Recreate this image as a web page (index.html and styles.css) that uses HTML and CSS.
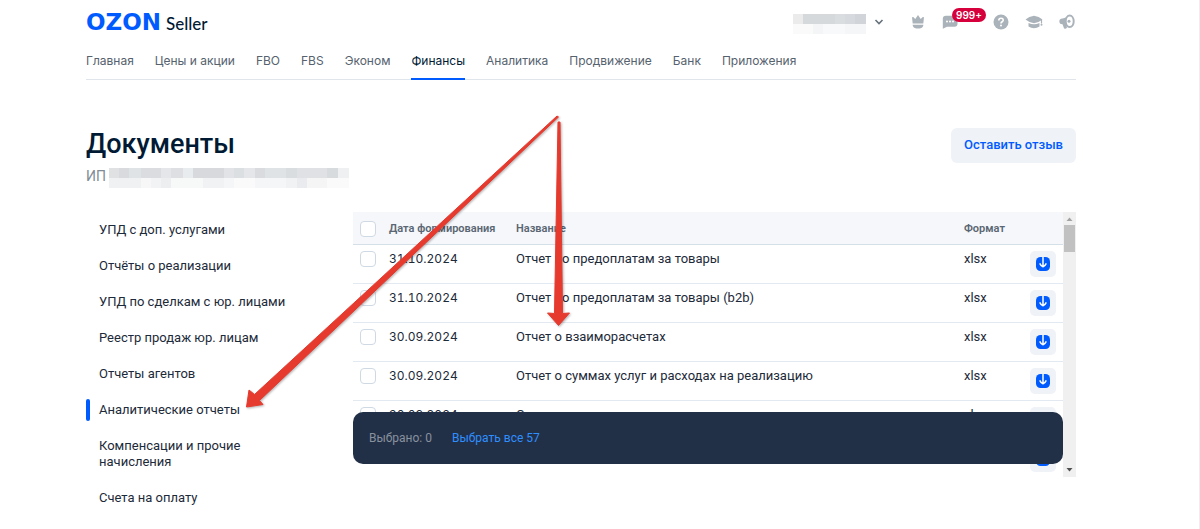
FILE: index.html
```html
<!DOCTYPE html>
<html lang="ru">
<head>
<meta charset="utf-8">
<title>Документы — Ozon Seller</title>
<link rel="stylesheet" href="styles.css">
</head>
<body>
<div class="page">
  <header class="topbar">
    <a class="logo" href="#"><span class="logo-brand">OZON</span><span class="logo-product">Seller</span></a>
    <div class="tools">
      <button class="account" type="button" aria-label="Аккаунт">
        <span class="mask mask-account"></span>
        <svg width="10" height="8" viewBox="0 0 10 8"><path d="M1.500 2 5 5.500 8.500 2" fill="none" stroke="#66727d" stroke-width="1.600"/></svg>
      </button>
      <button class="tool tool-first" type="button" aria-label="Премиум"><svg width="16" height="16" viewBox="0 0 16 16"><path d="M2 3.200 3.200 3 5.300 5 8 1l2.700 4 2.100-2 1.200.2-.7 6.300H2.700z"/><path d="M2.600 10.800h10.800c-.3 2.300-1.400 3.700-5.400 3.700s-5.100-1.400-5.400-3.700z"/></svg></button>
      <button class="tool" type="button" aria-label="Сообщения"><svg width="16" height="16" viewBox="0 0 16 16"><path d="M4 1.800h8.500q3 0 3 3v5q0 3-3 3H5L.8 14.800V4.800q0-3 3.200-3z"/><g fill="#fff"><circle cx="5" cy="7.500" r="1"/><circle cx="8" cy="7.500" r="1"/><circle cx="11" cy="7.500" r="1"/></g></svg><span class="badge">999+</span></button>
      <button class="tool tool-wide" type="button" aria-label="Помощь"><svg width="16" height="16" viewBox="0 0 16 16"><circle cx="8" cy="8" r="7.500"/><path d="M5.800 6.400C5.800 3.500 10.300 3.600 10.200 6.200 10.200 7.700 8 7.800 8 9.400" fill="none" stroke="#fff" stroke-width="1.600"/><circle cx="8" cy="11.600" r="1" fill="#fff"/></svg></button>
      <button class="tool" type="button" aria-label="Обучение"><svg width="18" height="16" viewBox="0 0 18 16"><path d="M.5 5.500Q4 2.500 9 1.700q5 .8 8.500 3.800Q14 8.500 9 9.200 4 8.500.5 5.500z"/><path d="M3.500 9Q9 11.500 14.500 9v3.500Q12 14.300 9 14.300T3.500 12.500z"/><path d="M16.500 6v3.500" stroke="#abb3ba" stroke-width="1.200"/><circle cx="16.500" cy="10.700" r="1"/></svg></button>
      <button class="tool" type="button" aria-label="Новости"><svg width="16" height="16" viewBox="0 0 16 16"><path d="M10 1.500C7 4 3.500 4.500 2 4.800-.2 5.500-.2 9.500 2 10l1.500.3L5 14.300q1.500 1.300 3-.5L7.500 11.500 10 13.500z"/><ellipse cx="10.700" cy="7.300" rx="4" ry="5.700" fill="#fff" stroke="#abb3ba" stroke-width="2"/><circle cx="10" cy="7.300" r="1.500"/></svg></button>
    </div>
  </header>

  <nav class="nav">
    <a href="#">Главная</a><a href="#">Цены и акции</a><a href="#">FBO</a><a href="#">FBS</a><a href="#">Эконом</a><a class="current" href="#">Финансы</a><a href="#">Аналитика</a><a href="#">Продвижение</a><a href="#">Банк</a><a href="#">Приложения</a>
  </nav>

  <section class="heading">
    <div>
      <h1>Документы</h1>
      <p class="owner">ИП <span class="mask mask-owner"></span></p>
    </div>
    <button class="feedback" type="button">Оставить отзыв</button>
  </section>

  <main class="content">
    <aside class="side">
      <a href="#">УПД с доп. услугами</a>
      <a href="#">Отчёты о реализации</a>
      <a href="#">УПД по сделкам с юр. лицами</a>
      <a href="#">Реестр продаж юр. лицам</a>
      <a href="#">Отчеты агентов</a>
      <a class="current" href="#">Аналитические отчеты</a>
      <a href="#">Компенсации и прочие начисления</a>
      <a href="#">Счета на оплату</a>
      <a href="#">Акты сверки</a>
    </aside>
    <div class="panel">
      <div class="viewport">
        <table class="docs">
          <thead>
            <tr><th class="col-check"><input type="checkbox" aria-label="Выбрать все"></th><th class="col-date">Дата формирования</th><th>Название</th><th class="col-format">Формат</th><th class="col-action"></th></tr>
          </thead>
          <tbody>
            <tr><td><input type="checkbox" aria-label="Выбрать документ"></td><td class="date">31.10.2024</td><td>Отчет по предоплатам за товары</td><td>xlsx</td><td><button class="download" type="button" aria-label="Скачать"><svg width="14" height="14" viewBox="0 0 14 14"><rect width="14" height="14" rx="4.500" fill="#005bff"/><path d="M7 0v9.500M3.700 6.300Q5 9 7 9.700 9 9 10.300 6.300" fill="none" stroke="#fff" stroke-width="1.500"/></svg></button></td></tr>
            <tr><td><input type="checkbox" aria-label="Выбрать документ"></td><td class="date">31.10.2024</td><td>Отчет по предоплатам за товары (b2b)</td><td>xlsx</td><td><button class="download" type="button" aria-label="Скачать"><svg width="14" height="14" viewBox="0 0 14 14"><rect width="14" height="14" rx="4.500" fill="#005bff"/><path d="M7 0v9.500M3.700 6.300Q5 9 7 9.700 9 9 10.300 6.300" fill="none" stroke="#fff" stroke-width="1.500"/></svg></button></td></tr>
            <tr><td><input type="checkbox" aria-label="Выбрать документ"></td><td class="date">30.09.2024</td><td>Отчет о взаиморасчетах</td><td>xlsx</td><td><button class="download" type="button" aria-label="Скачать"><svg width="14" height="14" viewBox="0 0 14 14"><rect width="14" height="14" rx="4.500" fill="#005bff"/><path d="M7 0v9.500M3.700 6.300Q5 9 7 9.700 9 9 10.300 6.300" fill="none" stroke="#fff" stroke-width="1.500"/></svg></button></td></tr>
            <tr><td><input type="checkbox" aria-label="Выбрать документ"></td><td class="date">30.09.2024</td><td>Отчет о суммах услуг и расходах на реализацию</td><td>xlsx</td><td><button class="download" type="button" aria-label="Скачать"><svg width="14" height="14" viewBox="0 0 14 14"><rect width="14" height="14" rx="4.500" fill="#005bff"/><path d="M7 0v9.500M3.700 6.300Q5 9 7 9.700 9 9 10.300 6.300" fill="none" stroke="#fff" stroke-width="1.500"/></svg></button></td></tr>
            <tr><td><input type="checkbox" aria-label="Выбрать документ"></td><td class="date">30.09.2024</td><td>Отчет</td><td>xlsx</td><td><button class="download" type="button" aria-label="Скачать"><svg width="14" height="14" viewBox="0 0 14 14"><rect width="14" height="14" rx="4.500" fill="#005bff"/><path d="M7 0v9.500M3.700 6.300Q5 9 7 9.700 9 9 10.300 6.300" fill="none" stroke="#fff" stroke-width="1.500"/></svg></button></td></tr>
            <tr><td><input type="checkbox" aria-label="Выбрать документ"></td><td class="date">30.09.2024</td><td>Отчет</td><td>xlsx</td><td><button class="download" type="button" aria-label="Скачать"><svg width="14" height="14" viewBox="0 0 14 14"><rect width="14" height="14" rx="4.500" fill="#005bff"/><path d="M7 0v9.500M3.700 6.300Q5 9 7 9.700 9 9 10.300 6.300" fill="none" stroke="#fff" stroke-width="1.500"/></svg></button></td></tr>
          </tbody>
        </table>
        <div class="selection"><span>Выбрано: 0</span><button type="button">Выбрать все 57</button></div>
      </div>
      <div class="scrollbar">
        <svg width="13" height="13" viewBox="0 0 13 13"><path d="M3.500 9h6l-3-3.500z" fill="#a3a3a3"/></svg>
        <span class="thumb"></span>
        <svg class="scroll-down" width="13" height="13" viewBox="0 0 13 13"><path d="M3.500 4h6l-3 3.500z" fill="#505050"/></svg>
      </div>
    </div>
  </main>
</div>
<svg class="arrows" width="600" height="440" viewBox="0 0 600 440" aria-hidden="true">
  <g fill="#e63a2e" stroke="#e63a2e" stroke-linejoin="round">
    <path d="M557 116 254.500 394.500 249 390 246.500 407 263 404.500 259.500 400.500 558.500 117z"/>
    <path d="M558 122 554.500 313.500 547.500 313 558.500 325.500 569.500 313 562.500 313.500 560 122z"/>
  </g>
</svg>
</body>
</html>
```
FILE: styles.css
```css
* {
  box-sizing: border-box;
}

body {
  margin: 0;
  height: 100vh;
  overflow: hidden;
  position: relative;
  background: #fff;
  border-right: 1px solid #eceef0;
  color: #1d2a39;
  font: 13px/16px Roboto, Inter, sans-serif;
}

a {
  color: inherit;
  text-decoration: none;
}

button {
  padding: 0;
  border: 0;
  background: none;
  font: inherit;
  cursor: pointer;
}

svg {
  display: block;
}

.page {
  padding: 0 123px 0 86px;
}

.topbar {
  display: flex;
  justify-content: space-between;
  align-items: center;
  height: 44px;
}

.logo {
  display: flex;
  align-items: baseline;
  gap: 5px;
  padding-top: 2px;
}

.logo-brand {
  color: #005bff;
  font: bold 23px/24px "DejaVu Sans", sans-serif;
}

.logo-product {
  color: #001a34;
  font: 500 17px/24px Lato, sans-serif;
}

.tools {
  display: flex;
  align-items: center;
  padding-right: 1px;
}

.account {
  display: flex;
  align-items: center;
  gap: 8px;
}

.mask {
  display: inline-block;
  height: 20px;
}

.mask-account {
  width: 73px;
  margin-top: 4px;
  background:
    linear-gradient(90deg, #ebebec 0 10px, #d6d9dc 10px 42px, #dadde0 42px 52px, #d6dade 52px 62px, #d1d5da 62px) 0 0 / 100% 10px no-repeat,
    linear-gradient(90deg, #fafafa 0 20px, #f4f5f6 20px 30px, #f8f9fa 30px 52px, #f4f6f7 52px) 0 10px / 100% 10px no-repeat;
}

.tool {
  position: relative;
  margin-left: 16px;
  fill: #abb3ba;
}

.tool-first {
  margin-left: 26px;
}

.tool-wide {
  margin-left: 35px;
}

.badge {
  position: absolute;
  left: 10px;
  top: -6px;
  padding: 0 4px;
  border-radius: 7px;
  background: #d6003c;
  color: #fff;
  font: 600 10px/14px Inter, sans-serif;
}

.nav {
  display: flex;
  gap: 21px;
  border-bottom: 1px solid #dfe5eb;
  color: #56626e;
  font-family: Inter, sans-serif;
  font-size: 12px;
}

.nav a {
  padding: 9px 0;
  margin-bottom: -1px;
  border-bottom: 2px solid transparent;
}

.nav .current {
  border-color: #005bff;
  color: #001a34;
}

.heading {
  display: flex;
  justify-content: space-between;
  align-items: flex-start;
  padding-top: 48px;
}

h1 {
  margin: 0;
  color: #001a34;
  font-size: 27px;
  line-height: 32px;
  font-weight: 500;
}

.owner {
  display: flex;
  gap: 3px;
  margin: 8px 0 0;
  color: #808b96;
  font-size: 14px;
}

.mask-owner {
  width: 240px;
  background:
    linear-gradient(90deg, #dfe1e3 0 10px, #d9dadd 10px 20px, #e0e3e5 20px 32px, #dadcdf 32px 52px, #e4e6e9 52px 62px, #dddfe2 62px 74px, #e8ecee 74px 84px, #d7d9dc 84px 115px, #e1e3e7 115px 125px, #dcdfe2 125px 135px, #e4e6ea 135px 146px, #d9dbde 146px 156px, #e0e3e6 156px 177px, #dadde0 177px 188px, #dfe1e4 188px 218px, #d8dbde 218px 229px, #eff0f2 229px) 0 0 / 100% 10px no-repeat,
    linear-gradient(90deg, #f0f1f3 0 32px, #f7f7f8 32px 42px, #f2f3f4 42px 52px, #eceef0 52px 62px, #f7f8f8 62px 94px, #f1f2f3 94px 115px, #f5f6f7 115px 125px, #fafafa 125px 146px, #f5f6f7 146px 177px, #f1f2f4 177px 188px, #eaebee 188px 198px, #f5f5f6 198px 218px, #fafafa 218px) 0 10px / 100% 10px no-repeat;
}

.feedback {
  padding: 9px 13px 10px;
  border-radius: 6px;
  background: #eff2f7;
  color: #005bff;
  font-weight: 500;
}

.content {
  display: flex;
  padding-top: 24px;
}

.side {
  flex: 0 0 267px;
  padding-right: 56px;
}

.side a {
  display: block;
  position: relative;
  padding: 10px 0 10px 13px;
}

.side .current::before {
  content: "";
  position: absolute;
  left: 0;
  top: 7px;
  width: 4px;
  height: 22px;
  border-radius: 2px;
  background: #005bff;
}

.panel {
  display: flex;
  flex: 1;
  height: 265px;
}

.viewport {
  position: relative;
  flex: 1;
  overflow: hidden;
}

.docs {
  width: 100%;
  table-layout: fixed;
  border-collapse: separate;
  border-spacing: 0;
}

.docs th {
  height: 33px;
  padding: 1px 0 0;
  border-bottom: 1px solid #d5dfe8;
  background: #f5f7fa;
  color: #5a6673;
  font-size: 11px;
  font-weight: 600;
  text-align: left;
}

.docs td {
  height: 39px;
  padding: 6px 0 0;
  border-bottom: 1px solid #e3e9f0;
  vertical-align: top;
  white-space: nowrap;
}

.docs .date {
  font-family: Inter, sans-serif;
  font-size: 12px;
  font-variant-numeric: tabular-nums;
}

.docs input {
  appearance: none;
  display: block;
  width: 16px;
  height: 16px;
  margin: 0 0 0 7px;
  border: 1px solid #cfd9e4;
  border-radius: 4px;
  background: #fff;
}

.col-check {
  width: 36px;
}

.col-date {
  width: 127px;
}

.col-format {
  width: 66px;
}

.col-action {
  width: 33px;
}

.download {
  display: grid;
  place-items: center;
  width: 26px;
  height: 26px;
  border-radius: 5px;
  background: #eff2f7;
}

.selection {
  position: absolute;
  inset: auto 0 13px;
  display: flex;
  gap: 20px;
  padding: 18px 16px;
  border-radius: 10px;
  background: #223047;
  color: #88919e;
  font-size: 12px;
}

.selection button {
  color: #2e8fff;
}

.scrollbar {
  display: flex;
  flex-direction: column;
  width: 13px;
  background: #f0f0f0;
}

.thumb {
  height: 27px;
  margin: 0 1px;
  background: #c1c1c1;
}

.scroll-down {
  margin-top: auto;
}

.arrows {
  position: absolute;
  left: 0;
  top: 0;
  pointer-events: none;
  filter: drop-shadow(1px 1px 1px rgba(0, 0, 0, 0.3));
}
```
